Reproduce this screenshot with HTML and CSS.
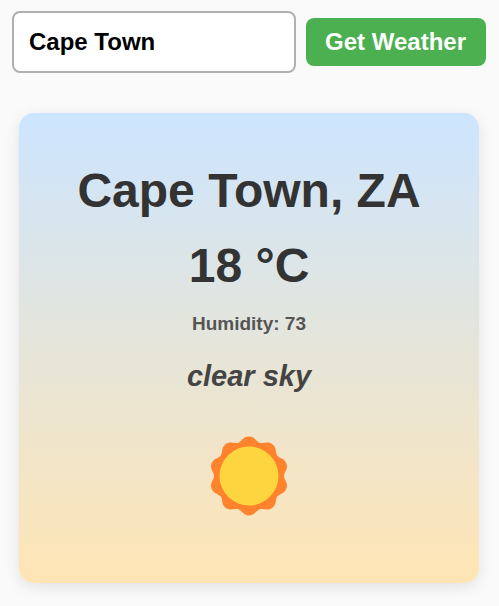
FILE: index.html
```html
<!DOCTYPE html>
<html lang="en">
<head>
<meta charset="utf-8">
<meta name="viewport" content="width=device-width, initial-scale=1">
<title>Weather</title>
<link rel="stylesheet" href="styles.css">
</head>
<body>
<main class="app">
  <form class="search">
    <input class="city-input" type="text" value="Cape Town" aria-label="City">
    <button class="submit" type="submit">Get Weather</button>
  </form>
  <section class="card">
    <h1 class="city">Cape Town, ZA</h1>
    <p class="temp">18 °C</p>
    <p class="humidity">Humidity: 73</p>
    <p class="description">clear sky</p>
    <svg class="icon" viewBox="-40 -40 80 80" role="img" aria-label="Sun">
      <defs>
        <path id="ray" d="M0 0L-10.8 -33.3C-6.6 -34.7 -6.2 -39.4 0 -39.4S6.6 -34.7 10.8 -33.3Z"/>
      </defs>
      <g fill="#ff822d">
        <circle r="34"/>
        <use href="#ray"/>
        <use href="#ray" transform="rotate(36)"/>
        <use href="#ray" transform="rotate(72)"/>
        <use href="#ray" transform="rotate(108)"/>
        <use href="#ray" transform="rotate(144)"/>
        <use href="#ray" transform="rotate(180)"/>
        <use href="#ray" transform="rotate(216)"/>
        <use href="#ray" transform="rotate(252)"/>
        <use href="#ray" transform="rotate(288)"/>
        <use href="#ray" transform="rotate(324)"/>
      </g>
      <circle r="29.5" fill="#fdd53f"/>
    </svg>
  </section>
</main>
</body>
</html>
```

FILE: styles.css
```css
* { box-sizing: border-box; }
body {
  margin: 0;
  background: #fafafa;
  font-family: Arial, "Liberation Sans", sans-serif;
  font-weight: bold;
}
.app { padding: 11px 13px 22px 12px; }
.search { display: flex; align-items: center; gap: 10px; }
.city-input {
  flex: 1;
  min-width: 0;
  height: 62px;
  padding: 0 15px;
  border: 2px solid #b0b0b0;
  border-radius: 8px;
  background: #fff;
  color: #000;
  font: inherit;
  font-size: 24px;
}
.submit {
  height: 48px;
  padding: 0 20px 0 19px;
  border: 0;
  border-radius: 8px;
  background: #4caf50;
  color: #fff;
  font: inherit;
  font-size: 24px;
}
.card {
  display: flex;
  flex-direction: column;
  align-items: center;
  margin: 40px 7px 0;
  padding: 50px 50px 67px;
  border-radius: 15px;
  background: linear-gradient(180deg, #cce5ff, #ffe5b4);
  box-shadow: 0 4px 15px rgba(0, 0, 0, 0.1);
  text-align: center;
}
.city, .temp, .humidity, .description { margin: 0; }
.city { color: #333; font-size: 48px; line-height: 55px; }
.temp { margin-top: 20px; color: #333; font-size: 48px; line-height: 55px; }
.humidity { margin-top: 20px; color: #555; font-size: 19px; line-height: 22px; }
.description { margin-top: 24px; color: #444; font-size: 29px; line-height: 34px; font-style: italic; }
.icon { width: 80px; height: 80px; margin-top: 43px; }
```
